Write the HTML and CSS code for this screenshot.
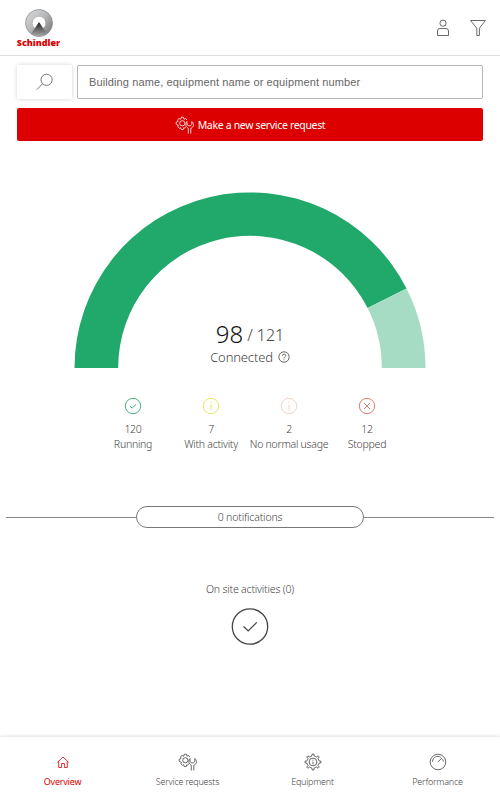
FILE: index.html
```html
<!DOCTYPE html>
<html lang="en">
<head>
<meta charset="utf-8">
<title>Schindler - Overview</title>
<link rel="stylesheet" href="styles.css">
</head>
<body>
  <svg class="sprite">
    <symbol id="service" viewBox="0 0 20 18">
      <path d="M10.8 11.2 L9.6 12 L8.8 11.7 L8.3 13.5 H6.2 L5.7 11.7 L4.5 12.3 L2.8 10.8 L3.4 9.3 L1.2 8.3 V6.2 L3.1 5.5 L2.5 3.9 L4 2.5 L5.7 3.2 L6.3 1.2 H8.3 L9 3.2 L10.8 2.5 L12 4"/>
      <circle cx="7.3" cy="7.3" r="2.6"/>
      <path d="M13.3 17.5 V12.2 C10.6 11 10 8 12 5.5 V8.6 L13.6 9.8 H15.3 L16.8 8.6 V5.5 C19.5 8 18.8 11.2 15.8 12.2 V17.5"/>
    </symbol>
  </svg>

  <header class="header">
    <div class="logo">
      <svg width="30" height="30" viewBox="0 0 30 30">
        <defs>
          <linearGradient id="metal" x1="0" y1="0" x2="1" y2="1">
            <stop offset="0" stop-color="#dcdddd"/>
            <stop offset=".45" stop-color="#b9babb"/>
            <stop offset="1" stop-color="#6f7172"/>
          </linearGradient>
          <linearGradient id="peak" x1="0" y1="0" x2="0" y2="1">
            <stop offset="0" stop-color="#222"/>
            <stop offset="1" stop-color="#aaa"/>
          </linearGradient>
        </defs>
        <circle cx="15" cy="15" r="13.5" fill="url(#metal)" stroke="#77797a" stroke-width=".6"/>
        <circle cx="15" cy="15" r="6.8" fill="#fff" stroke="#999" stroke-width=".5"/>
        <path d="M15 14 L23 26 Q15 31 7 26 Z" fill="url(#peak)"/>
      </svg>
      <span class="logo-name">Schindler</span>
    </div>
    <div class="header-icons">
      <svg class="icon" width="14" height="18" viewBox="0 0 14 18">
        <circle cx="7" cy="4.2" r="3.1"/>
        <path d="M1.5 16.5 V12 Q1.5 9.5 4 9.5 H10 Q12.5 9.5 12.5 12 V16.5 Z"/>
      </svg>
      <svg class="icon filter" width="18" height="18" viewBox="0 0 18 18">
        <path d="M1.6 1.5 H16.4 L10.4 9.2 V16.5 H7.8 V9.2 Z"/>
      </svg>
    </div>
  </header>

  <main class="content">
    <div class="search">
      <button class="search-btn" aria-label="Search">
        <svg class="icon" width="18" height="18" viewBox="0 0 18 18">
          <circle cx="10.6" cy="6.8" r="5.6"/>
          <path d="M6.6 10.8 L.8 16.6"/>
        </svg>
      </button>
      <input class="search-input" type="text" placeholder="Building name, equipment name or equipment number">
    </div>
    <button class="request-btn">
      <svg class="icon" width="20" height="18"><use href="#service"/></svg>
      <span class="request-text">Make a new service request</span>
    </button>

    <section class="gauge">
      <svg width="352" height="177" viewBox="0 -.5 352 177">
        <path fill="#21a86b" d="M.5 176.5 A175.5 175.5 0 0 1 332.5 97 L293.6 116.6 A131.8 131.8 0 0 0 44.2 176.5 Z"/>
        <path fill="#a6dcc4" d="M332.5 97 A175.5 175.5 0 0 1 351.5 176.5 H307.8 A131.8 131.8 0 0 0 293.6 116.6 Z"/>
      </svg>
      <div class="gauge-label">
        <div class="gauge-count"><span class="count">98</span><span class="total">/ 121</span></div>
        <div class="connected">
          <span>Connected</span>
          <svg class="icon help" width="12" height="12" viewBox="0 0 12 12">
            <circle cx="6" cy="6" r="5.2"/>
            <path d="M4.3 4.8 C4.3 2.6 7.7 2.6 7.7 4.6 C7.7 5.8 6 5.8 6 7.3 M6 8.3 V9.2"/>
          </svg>
        </div>
      </div>
    </section>

    <section class="stats">
      <div class="stat">
        <svg class="icon running" width="18" height="18" viewBox="0 0 18 18">
          <circle cx="9" cy="9" r="7.7"/><path d="M6 9.2 L8.2 11.1 L12.2 7.2"/>
        </svg>
        <span>120</span>
        <span>Running</span>
      </div>
      <div class="stat">
        <svg class="icon activity" width="18" height="18" viewBox="0 0 18 18">
          <circle cx="9" cy="9" r="7.7"/><path d="M9 4.5 V5.8 M9 7.3 V13.3"/>
        </svg>
        <span>7</span>
        <span>With activity</span>
      </div>
      <div class="stat">
        <svg class="icon unusual" width="18" height="18" viewBox="0 0 18 18">
          <circle cx="9" cy="9" r="7.7"/><path d="M9 4.5 V5.8 M9 7.3 V13.3"/>
        </svg>
        <span>2</span>
        <span>No normal usage</span>
      </div>
      <div class="stat">
        <svg class="icon stopped" width="18" height="18" viewBox="0 0 18 18">
          <circle cx="9" cy="9" r="7.7"/><path d="M6 6 L12 12 M12 6 L6 12"/>
        </svg>
        <span>12</span>
        <span>Stopped</span>
      </div>
    </section>

    <div class="notifications">
      <span class="pill">0 notifications</span>
    </div>

    <section class="onsite">
      <span>On site activities (0)</span>
      <svg class="icon" width="38" height="38" viewBox="0 -.5 38 38">
        <circle class="ring" cx="19" cy="19" r="17.7"/>
        <path class="tick" d="M12.6 19 L17.2 23.4 L25.8 14.8"/>
      </svg>
    </section>
  </main>

  <nav class="tabs">
    <a class="tab active">
      <svg class="icon" width="18" height="18" viewBox="0 0 18 18">
        <path d="M3.2 9.5 L9 4 L14.8 9.5 M4.7 8.4 V14.5 H7.6 V10.5 H10.4 V14.5 H13.3 V8.4"/>
      </svg>
      <span>Overview</span>
    </a>
    <a class="tab">
      <svg class="icon" width="20" height="18"><use href="#service"/></svg>
      <span>Service requests</span>
    </a>
    <a class="tab">
      <svg class="icon" width="18" height="18" viewBox="-9 -9 18 18">
        <path d="M-1.2 -6 L-.8 -8 H.8 L1.2 -6 L3.4 -5 L5.1 -6.2 L6.2 -5.1 L5 -3.4 L6 -1.2 L8 -.8 V.8 L6 1.2 L5 3.4 L6.2 5.1 L5.1 6.2 L3.4 5 L1.2 6 L.8 8 H-.8 L-1.2 6 L-3.4 5 L-5.1 6.2 L-6.2 5.1 L-5 3.4 L-6 1.2 L-8 .8 V-.8 L-6 -1.2 L-5 -3.4 L-6.2 -5.1 L-5.1 -6.2 L-3.4 -5 Z"/>
        <circle cx="0" cy="0" r="3.9"/>
        <path d="M0 -2.3 V-1.3 M0 -.4 V2.4"/>
      </svg>
      <span>Equipment</span>
    </a>
    <a class="tab">
      <svg class="icon" width="18" height="18" viewBox="0 0 18 18">
        <circle cx="9" cy="9" r="7.8"/>
        <path d="M8.8 9 L13 5 M3.5 8.7 C3.8 3.7 8.5 2.3 11.8 4.2 M13.7 6.2 L14.4 8.6"/>
      </svg>
      <span>Performance</span>
    </a>
  </nav>
</body>
</html>
```
FILE: styles.css
```css
* {
  box-sizing: border-box;
}
body {
  margin: 0;
  height: 800px;
  display: flex;
  flex-direction: column;
  overflow: hidden;
  background: #fff;
  color: #444;
  font-family: "Noto Sans", "Open Sans", sans-serif;
  font-weight: 300;
  font-size: 11px;
}
svg {
  display: block;
}
button {
  border: none;
  padding: 0;
}
.sprite {
  position: absolute;
  width: 0;
  height: 0;
}
.icon {
  fill: none;
  stroke: currentColor;
  stroke-width: 0.8;
}
.header {
  height: 56px;
  flex: none;
  display: flex;
  justify-content: space-between;
  padding: 8px 13px 0 16px;
  border-bottom: 1px solid #ddd;
}
.logo {
  width: 45px;
  display: flex;
  flex-direction: column;
  align-items: center;
}
.logo-name {
  color: #dc0000;
  font-family: "Open Sans", sans-serif;
  font-weight: 800;
  font-size: 9px;
  line-height: 10px;
}
.header-icons {
  display: flex;
  gap: 19px;
  padding-top: 11px;
}
.content {
  flex: 1;
  padding-top: 9px;
}
.search {
  display: flex;
  gap: 5px;
  height: 34px;
  margin: 0 17px;
}
.search-btn {
  width: 55px;
  display: flex;
  align-items: center;
  justify-content: center;
  background: #fff;
  color: #555;
  box-shadow: 0 0 4px rgba(0, 0, 0, 0.18);
}
.search-input {
  flex: 1;
  padding: 0 11px;
  border: 1px solid #b5b5b5;
  border-radius: 2px;
  font-family: "Liberation Sans", Arial, sans-serif;
  font-size: 11px;
  letter-spacing: 0.12px;
}
.search-input::placeholder {
  color: #666;
}
.request-btn {
  width: 466px;
  height: 33px;
  margin: 9px 17px 0;
  display: flex;
  align-items: center;
  justify-content: center;
  gap: 3px;
  border-radius: 2px;
  background: #dc0000;
  color: #fff;
  font-family: inherit;
  font-size: 10.5px;
  font-weight: 400;
  letter-spacing: -0.33px;
}
.gauge {
  position: relative;
  width: 352px;
  height: 177px;
  margin: 50px auto 0;
}
.gauge-label {
  position: absolute;
  top: 128px;
  left: 0;
  width: 100%;
  text-align: center;
}
.gauge-count {
  display: flex;
  justify-content: center;
  align-items: baseline;
  gap: 4px;
  line-height: 30px;
}
.count {
  font-size: 24px;
  color: #111;
}
.total {
  position: relative;
  top: -2px;
  font-size: 16px;
}
.connected {
  display: flex;
  justify-content: center;
  align-items: center;
  gap: 5px;
  margin-top: -3px;
  font-size: 13px;
  line-height: 16px;
  letter-spacing: -0.15px;
}
.stats {
  display: grid;
  grid-template-columns: repeat(4, 78px);
  justify-content: center;
  margin-top: 29px;
}
.stat {
  display: flex;
  flex-direction: column;
  align-items: center;
  font-size: 10.5px;
  line-height: 15px;
  letter-spacing: -0.25px;
  white-space: nowrap;
}
.stat .icon {
  margin-bottom: 7px;
}
.running {
  color: #1b9c5b;
}
.activity {
  color: #ecdb3e;
}
.unusual {
  color: #f3c5bc;
}
.stopped {
  color: #cf5e48;
}
.notifications {
  display: flex;
  align-items: center;
  margin: 54px 6px 0;
}
.notifications::before,
.notifications::after {
  content: "";
  flex: 1;
  height: 1px;
  background: #888;
}
.pill {
  width: 228px;
  height: 22px;
  border: 1px solid #777;
  border-radius: 11px;
  font-size: 10.5px;
  line-height: 20px;
  letter-spacing: -0.15px;
  text-align: center;
}
.onsite {
  display: flex;
  flex-direction: column;
  align-items: center;
  gap: 10px;
  margin-top: 54px;
  font-size: 10.5px;
  line-height: 15px;
  letter-spacing: -0.17px;
}
.ring {
  stroke-width: 1.3;
}
.tick {
  stroke-width: 1.2;
}
.tabs {
  height: 63px;
  flex: none;
  display: grid;
  grid-template-columns: repeat(4, 1fr);
  box-shadow: 0 0 4px rgba(0, 0, 0, 0.2);
}
.tab {
  display: flex;
  flex-direction: column;
  align-items: center;
  padding-top: 16px;
  gap: 4px;
  font-size: 9px;
  line-height: 14px;
  letter-spacing: -0.22px;
}
.active {
  color: #dc0000;
}
.active span {
  font-weight: 400;
}
```
